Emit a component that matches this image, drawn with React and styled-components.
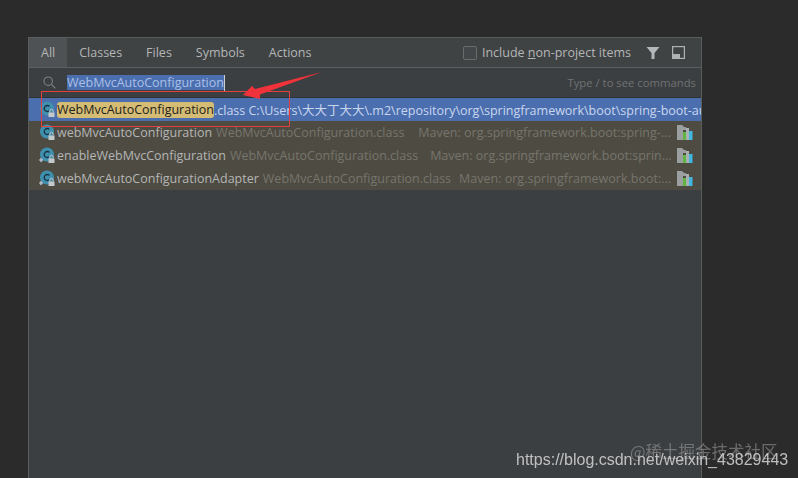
import React from 'react';
import styled, { createGlobalStyle } from 'styled-components';

const Global = createGlobalStyle`
  html, body { margin: 0; padding: 0; height: 100%; background: #2b2b2b; overflow: hidden; }
  #root { height: 100%; }
`;

const rows = [
  { name: 'webMvcAutoConfiguration', file: 'WebMvcAutoConfiguration.class', lib: 'Maven: org.springframework.boot:spring-...', gap: 14 },
  { name: 'enableWebMvcConfiguration', file: 'WebMvcAutoConfiguration.class', lib: 'Maven: org.springframework.boot:sprin...', gap: 12, marker: true },
  { name: 'webMvcAutoConfigurationAdapter', file: 'WebMvcAutoConfiguration.class', lib: 'Maven: org.springframework.boot:...', gap: 8, marker: true },
];

const tabs = ['All', 'Classes', 'Files', 'Symbols', 'Actions'];

const ClassIcon = ({ marker }) => (
  <IconBox>
    <svg width="17" height="17" viewBox="0 0 17 17">
      <circle cx="8" cy="7.5" r="7" fill="#3f8fae" />
      <path d="M10.4 5.4A3 3 0 1 0 10.4 9.6" fill="none" stroke="#16323f" strokeWidth="1.3" />
      {marker && <path d="M2 10.500l2.300 2.500-2.300 2.500-2-2.500z" fill="#a9b7c6" />}
      <rect x="9.500" y="11.500" width="6" height="4.500" fill="#c4c9cc" />
      <path d="M10.800 11.500V10a1.700 1.700 0 0 1 3.400 0V11.500" fill="none" stroke="#c4c9cc" />
    </svg>
  </IconBox>
);

const LibIcon = () => (
  <svg width="16" height="15" viewBox="0 0 16 15">
    <path d="M0 0h5l2 2h2v3H6v10H0z" fill="#9b9f9f" />
    <rect x="6" y="7" width="3" height="8" fill="#62b543" />
    <rect x="9" y="3" width="3" height="12" fill="#a9b0b0" />
    <rect x="12" y="6" width="3.500" height="9" fill="#40b6e0" />
  </svg>
);

export default function App() {
  return (
    <>
      <Global />
      <Page>
        <Panel>
          <TabBar>
            {tabs.map((t, i) => (
              <Tab key={t} $active={i === 0}>{t}</Tab>
            ))}
            <Spacer />
            <CheckBox />
            <CheckLabel>Include <u>n</u>on-project items</CheckLabel>
            <ToolIcon>
              <svg width="14" height="14" viewBox="0 0 14 14">
                <path d="M0.500 1h13L8.500 7v6h-3V7z" fill="#b4b8ba" />
              </svg>
            </ToolIcon>
            <ToolIcon>
              <svg width="13" height="13" viewBox="0 0 13 13">
                <rect x="0.600" y="0.600" width="11.800" height="11.800" fill="none" stroke="#afb1b3" strokeWidth="1.200" />
                <rect x="1" y="8" width="7" height="4" fill="#afb1b3" />
              </svg>
            </ToolIcon>
          </TabBar>
          <SearchBar>
            <SearchGlyph>
              <svg width="13" height="13" viewBox="0 0 13 13">
                <circle cx="5.200" cy="5.200" r="4.200" fill="none" stroke="#7f8284" strokeWidth="1.100" />
                <path d="M8.400 8.400l4 4" stroke="#7f8284" strokeWidth="1.100" />
              </svg>
            </SearchGlyph>
            <Query>WebMvcAutoConfiguration</Query>
            <Caret />
            <Spacer />
            <Hint>Type / to see commands</Hint>
          </SearchBar>
          <SelectedRow>
            <ClassIcon />
            <Match>WebMvcAutoConfiguration</Match>
            <SelectedText>.class C:\Users\大大丁大大\.m2\repository\org\springframework\boot\spring-boot-autoconfigure</SelectedText>
          </SelectedRow>
          {rows.map((r) => (
            <Row key={r.name}>
              <ClassIcon marker={r.marker} />
              <Name>{r.name}</Name>
              <Dim>{r.file}</Dim>
              <Lib $gap={r.gap}>{r.lib}</Lib>
              <LibSlot><LibIcon /></LibSlot>
            </Row>
          ))}
        </Panel>
        <RedBox />
        <Arrow width="82" height="30" viewBox="0 0 82 30">
          <path d="M0 24L9 15 12 18 79 1 17 23.500 17 28z" fill="#f0333a" />
        </Arrow>
        <JuejinMark>@稀土掘金技术社区</JuejinMark>
        <CsdnMark>https://blog.csdn.net/weixin_43829443</CsdnMark>
      </Page>
    </>
  );
}

const Page = styled.div`
  position: relative;
  height: 478px;
  padding: 37px 0 0 28px;
  box-sizing: border-box;
  overflow: hidden;
  font-family: "Open Sans", "Noto Sans CJK SC", sans-serif;
  filter: blur(0.35px);
`;

const Panel = styled.div`
  width: 674px;
  height: 441px;
  box-sizing: border-box;
  background: #3c3f41;
  border: 1px solid #5a5d5e;
  border-bottom: none;
  font-size: 12.5px;
  color: #b4b6b6;
`;

const TabBar = styled.div`
  display: flex;
  align-items: center;
  height: 29px;
  background: #404344;
  border-bottom: 1px solid #5c5f60;
`;

const Tab = styled.div`
  height: 100%;
  display: flex;
  align-items: center;
  padding: 0 12px;
  background: ${(p) => (p.$active ? '#4e5254' : 'transparent')};
`;

const Spacer = styled.div`
  flex: 1;
`;

const CheckBox = styled.div`
  width: 12px;
  height: 12px;
  border: 1px solid #6b6b6b;
  border-radius: 2px;
  background: #43474a;
  margin-right: 5px;
`;

const CheckLabel = styled.div`
  margin-right: 15px;
`;

const ToolIcon = styled.div`
  display: flex;
  width: 14px;
  margin-right: 12px;

  &:last-child {
    margin-right: 15px;
  }
`;

const SearchBar = styled.div`
  display: flex;
  align-items: center;
  height: 29px;
  padding: 0 5px 0 14px;
  background: #3c3f41;
  border-bottom: 1px solid #2f3132;
`;

const SearchGlyph = styled.div`
  display: flex;
  width: 24px;
`;

const Query = styled.span`
  background: #4b6eaf;
  color: #a9c0e8;
  line-height: 15px;
`;

const Caret = styled.div`
  width: 1px;
  height: 16px;
  background: #d0d0d0;
`;

const Hint = styled.div`
  color: #6f7274;
  font-size: 11.3px;
`;

const BaseRow = styled.div`
  display: flex;
  align-items: center;
  height: 23px;
  padding-left: 10px;
  white-space: nowrap;
  overflow: hidden;
`;

const SelectedRow = styled(BaseRow)`
  background: #4b6eaf;
`;

const Row = styled(BaseRow)`
  background: #4e4b42;
  padding-right: 8px;
`;

const IconBox = styled.div`
  display: flex;
  width: 18px;
  flex: none;
`;

const Match = styled.span`
  background: #d4bc74;
  color: #1e1e1e;
  border-radius: 3px;
  line-height: 16px;
`;

const SelectedText = styled.span`
  color: #c9d6ee;
`;

const Name = styled.span`
  margin-right: 4px;
`;

const Dim = styled.span`
  color: #76756d;
`;

const Lib = styled.span`
  color: #76756d;
  margin-left: ${(p) => p.$gap}px;
  flex: 1;
`;

const LibSlot = styled.div`
  display: flex;
  flex: none;
  width: 16px;
`;

const RedBox = styled.div`
  position: absolute;
  left: 41px;
  top: 91px;
  width: 247px;
  height: 34px;
  border: 1px solid #e2403f;
`;

const Arrow = styled.svg`
  position: absolute;
  left: 243px;
  top: 71px;
`;

const JuejinMark = styled.div`
  position: absolute;
  left: 630px;
  top: 439px;
  font-size: 16.5px;
  color: rgba(160, 160, 160, 0.55);
  font-family: "Noto Sans CJK SC", sans-serif;
`;

const CsdnMark = styled.div`
  position: absolute;
  left: 516px;
  top: 451px;
  font-size: 16px;
  color: rgba(215, 215, 215, 0.85);
  font-family: "Liberation Sans", sans-serif;
`;
